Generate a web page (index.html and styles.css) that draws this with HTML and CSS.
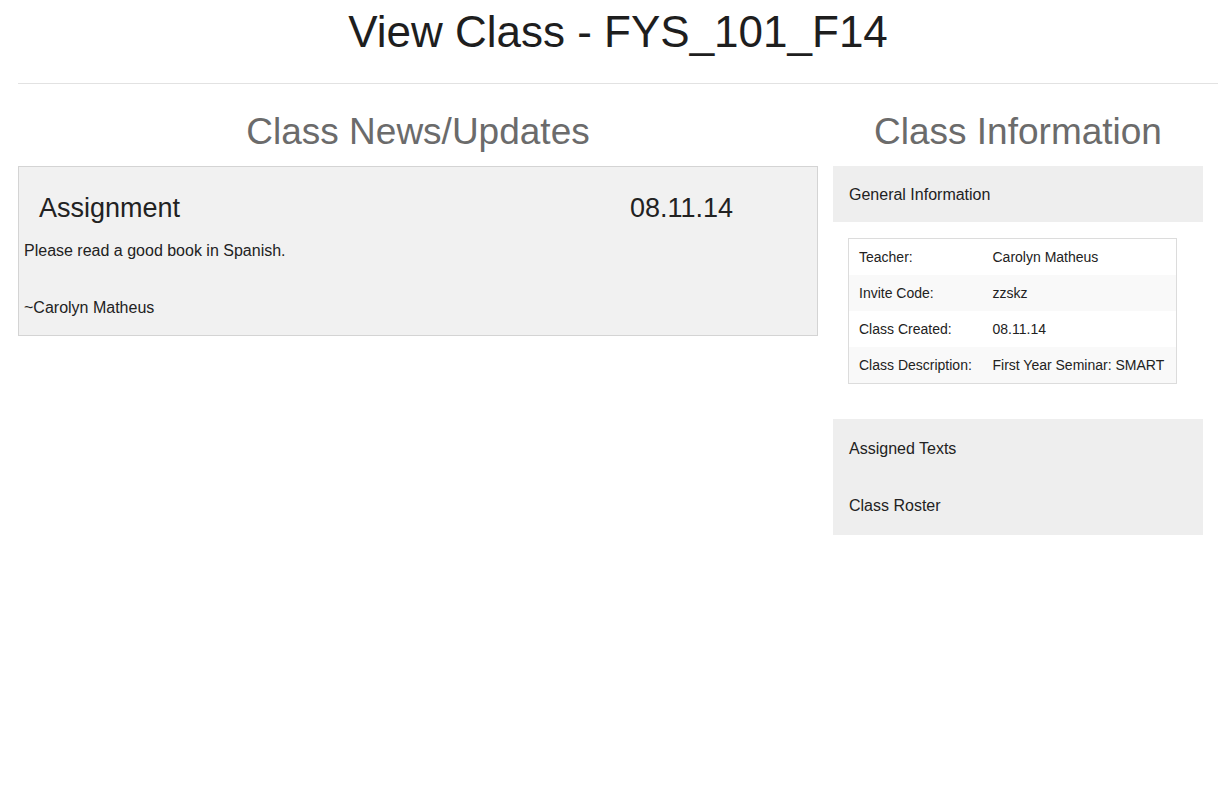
FILE: index.html
```html
<!DOCTYPE html>
<html>
<head>
<meta charset="utf-8">
<link rel="stylesheet" href="styles.css">
</head>
<body>
<div class="page">
  <h1 class="title">View Class - FYS_101_F14</h1>
  <hr class="rule">
  <div class="row">
    <div class="col-main">
      <h2 class="section-title">Class News/Updates</h2>
      <div class="news">
        <div class="news-head">
          <span class="news-type">Assignment</span>
          <span class="news-date">08.11.14</span>
        </div>
        <p class="news-body">Please read a good book in Spanish.</p>
        <p class="news-sign">~Carolyn Matheus</p>
      </div>
    </div>
    <div class="col-side">
      <h2 class="section-title">Class Information</h2>
      <div class="panel"><div class="panel-item panel-first">General Information</div></div>
      <table class="info">
        <tr><td class="k">Teacher:</td><td>Carolyn Matheus</td></tr>
        <tr><td class="k">Invite Code:</td><td>zzskz</td></tr>
        <tr><td class="k">Class Created:</td><td>08.11.14</td></tr>
        <tr><td class="k">Class Description:</td><td>First Year Seminar: SMART</td></tr>
      </table>
      <div class="panel panel-links">
        <div class="panel-item">Assigned Texts</div>
        <div class="panel-item">Class Roster</div>
      </div>
    </div>
  </div>
</div>
</body>
</html>
```

FILE: styles.css
```css
* { box-sizing: border-box; }
body {
  margin: 0;
  font-family: "Liberation Sans", Arial, sans-serif;
  color: #222;
  background: #fff;
}
.page {
  width: 1200px;
  margin: 0 0 0 18px;
}
.title {
  margin: 0;
  padding-top: 8px;
  text-align: center;
  font-size: 44px;
  font-weight: normal;
  line-height: 48px;
  color: #1e1e1e;
}
.rule {
  margin: 27px 0 0;
  border: 0;
  border-top: 1px solid #e2e2e2;
}
.row {
  display: flex;
}
.col-main {
  width: 800px;
}
.col-side {
  width: 400px;
  padding: 0 15px;
}
.section-title {
  margin: 28px 0 14px;
  text-align: center;
  font-size: 37px;
  font-weight: normal;
  line-height: 40px;
  color: #6b6b6b;
}
.news {
  background: #f1f1f1;
  border: 1px solid #d4d4d4;
  padding: 26px 5px 18px;
  height: 170px;
}
.news-head {
  display: flex;
  font-size: 27px;
  line-height: 30px;
  color: #222;
}
.news-type {
  padding-left: 15px;
  width: 606px;
}
.news-body, .news-sign {
  margin: 0;
  font-size: 16px;
  line-height: 22px;
}
.news-body { margin-top: 17px; }
.news-sign { margin-top: 35px; }
.panel {
  background: #eeeeee;
}
.panel-item {
  padding: 0 16px;
  height: 56px;
  line-height: 56px;
  font-size: 16px;
  color: #222;
}
.panel-first { line-height: 58px; }
.panel-links {
  margin-top: 35px;
  padding: 1px 0 1px;
}
.panel-links .panel-item { height: 57px; line-height: 57px; }
.info {
  margin: 16px 0 0 15px;
  width: 329px;
  border-collapse: collapse;
  border: 1px solid #dcdcdc;
  font-size: 14px;
  color: #222;
}
.info td {
  height: 36px;
  padding: 0 10px;
  white-space: nowrap;
}
.info tr:last-child td { height: 37px; }
.info td.k { width: 134px; }
.info tr:nth-child(even) td { background: #f9f9f9; }
```
